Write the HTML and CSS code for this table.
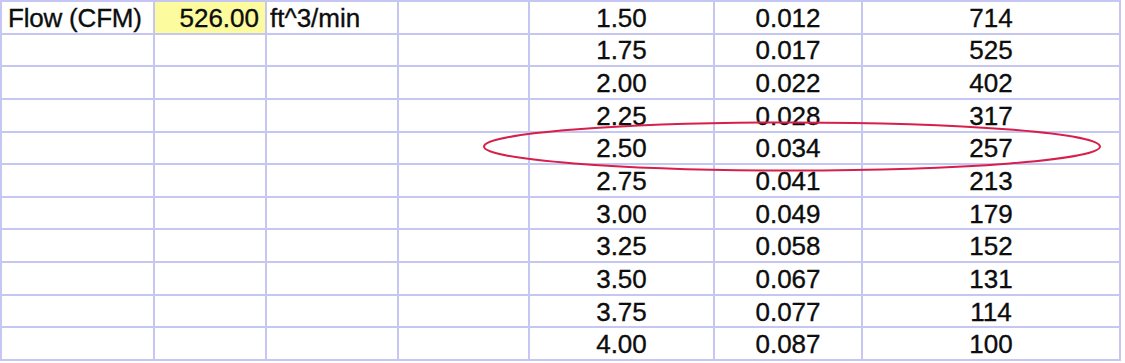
FILE: index.html
```html
<!DOCTYPE html>
<html>
<head>
<meta charset="utf-8">
<link rel="stylesheet" href="styles.css">
</head>
<body>
<div class="sheet">
  <div class="grid">
    <div class="cell label">Flow (CFM)</div><div class="cell input">526.00</div><div class="cell unit">ft^3/min</div><div class="cell"></div><div class="cell num">1.50</div><div class="cell num">0.012</div><div class="cell num">714</div>
    <div class="cell"></div><div class="cell"></div><div class="cell"></div><div class="cell"></div><div class="cell num">1.75</div><div class="cell num">0.017</div><div class="cell num">525</div>
    <div class="cell"></div><div class="cell"></div><div class="cell"></div><div class="cell"></div><div class="cell num">2.00</div><div class="cell num">0.022</div><div class="cell num">402</div>
    <div class="cell"></div><div class="cell"></div><div class="cell"></div><div class="cell"></div><div class="cell num">2.25</div><div class="cell num">0.028</div><div class="cell num">317</div>
    <div class="cell"></div><div class="cell"></div><div class="cell"></div><div class="cell"></div><div class="cell num">2.50</div><div class="cell num">0.034</div><div class="cell num">257</div>
    <div class="cell"></div><div class="cell"></div><div class="cell"></div><div class="cell"></div><div class="cell num">2.75</div><div class="cell num">0.041</div><div class="cell num">213</div>
    <div class="cell"></div><div class="cell"></div><div class="cell"></div><div class="cell"></div><div class="cell num">3.00</div><div class="cell num">0.049</div><div class="cell num">179</div>
    <div class="cell"></div><div class="cell"></div><div class="cell"></div><div class="cell"></div><div class="cell num">3.25</div><div class="cell num">0.058</div><div class="cell num">152</div>
    <div class="cell"></div><div class="cell"></div><div class="cell"></div><div class="cell"></div><div class="cell num">3.50</div><div class="cell num">0.067</div><div class="cell num">131</div>
    <div class="cell"></div><div class="cell"></div><div class="cell"></div><div class="cell"></div><div class="cell num">3.75</div><div class="cell num">0.077</div><div class="cell num">114</div>
    <div class="cell"></div><div class="cell"></div><div class="cell"></div><div class="cell"></div><div class="cell num">4.00</div><div class="cell num">0.087</div><div class="cell num">100</div>
  </div>
  <svg class="mark" width="1125" height="363" viewBox="0 0 1125 363" aria-hidden="true">
    <ellipse cx="792" cy="146.5" rx="308" ry="24" fill="none" stroke="#d71f4c" stroke-width="2"/>
  </svg>
</div>
</body>
</html>
```

FILE: styles.css
```css
html, body {
  margin: 0;
  padding: 0;
  background: #ffffff;
}

.sheet {
  position: relative;
  width: 1125px;
  height: 363px;
  overflow: hidden;
}

.grid {
  display: grid;
  width: 1121px;
  height: 361px;
  box-sizing: border-box;
  padding: 2px;
  gap: 2px;
  background: #c6c6f2;
  grid-template-columns: 151px 110px 130px 129px 183px 146px 256px;
  grid-template-rows: repeat(11, 1fr);
  font-family: "Liberation Sans", Arial, sans-serif;
  font-size: 26px;
  color: #0d0d0d;
  -webkit-text-stroke: 0.35px #0d0d0d;
}

.cell {
  background: #ffffff;
  display: flex;
  align-items: center;
  padding: 2px 4px 0;
  white-space: nowrap;
  overflow: hidden;
}

.label {
  padding-left: 6px;
  letter-spacing: -0.2px;
}

.input {
  background: #fcfc9e;
  justify-content: flex-end;
  padding-right: 6px;
}

.unit {
  padding-left: 3px;
}

.num {
  justify-content: center;
}

.mark {
  position: absolute;
  left: 0;
  top: 0;
  pointer-events: none;
}
```
